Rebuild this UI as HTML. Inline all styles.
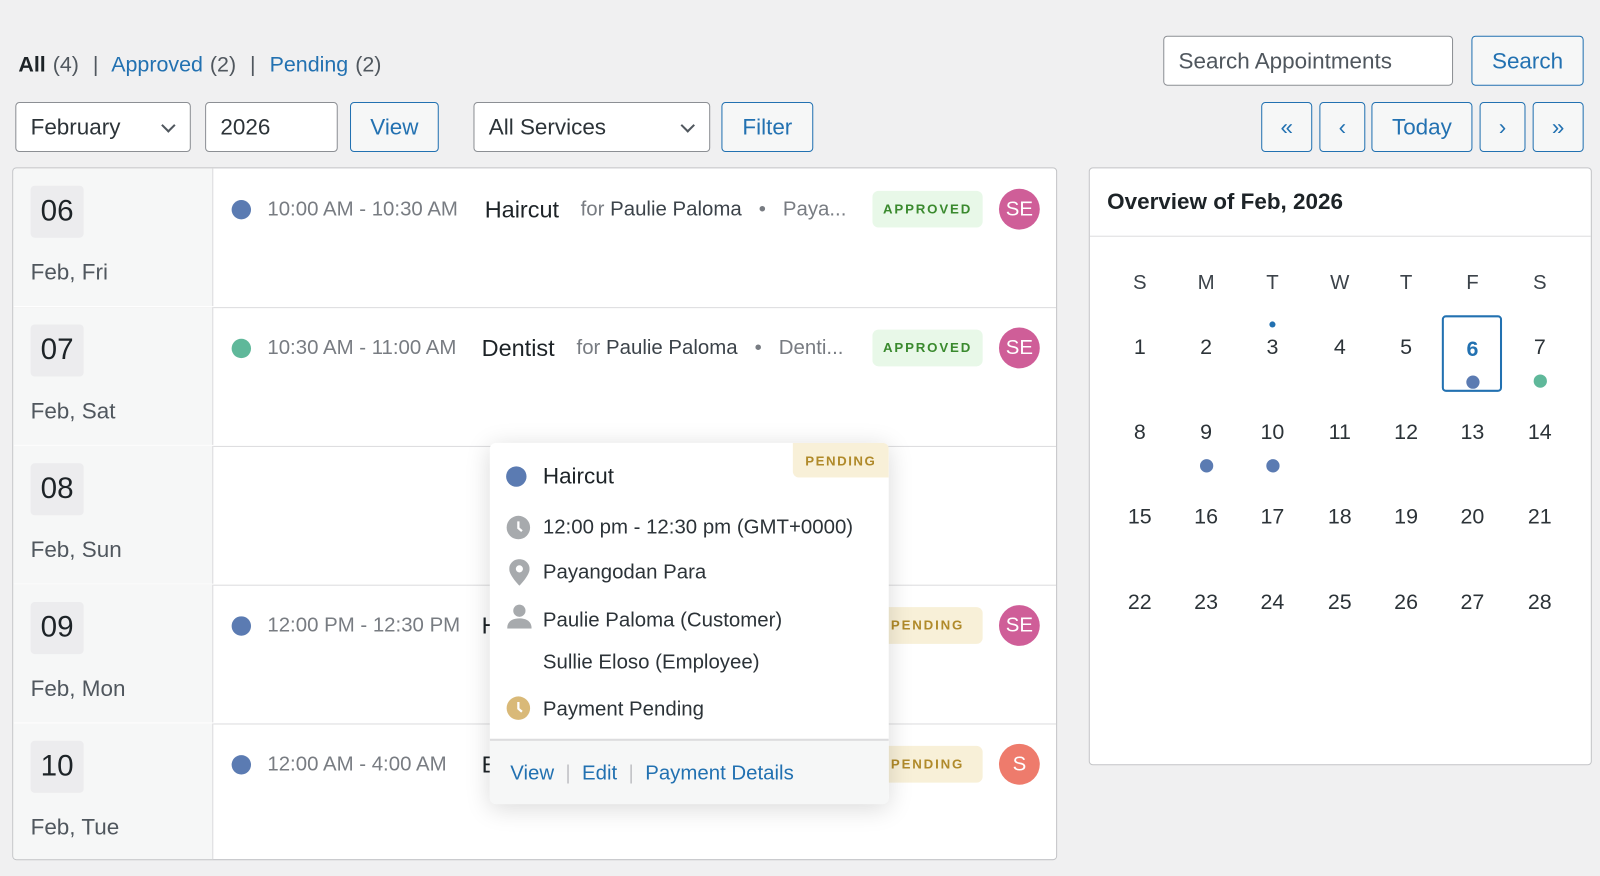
<!DOCTYPE html>
<html><head><meta charset="utf-8"><style>
html,body{margin:0;padding:0;background:#f0f0f1;overflow:hidden}
body{width:1600px;height:875px}
#w{position:absolute;left:0;top:0;width:1568px;height:858px;transform:scale(1.0204);transform-origin:0 0;font-family:"Liberation Sans",sans-serif;color:#1d2327}
.a{position:absolute}
.box{position:absolute;box-sizing:border-box;background:#fff;border:1px solid #8c8f94;border-radius:4px;font-size:22px;line-height:48px;padding-left:14px;color:#2c3338}
.btn{position:absolute;box-sizing:border-box;background:#f6f7f7;border:1px solid #2271b1;border-radius:4px;font-size:22px;line-height:48px;text-align:center;color:#2271b1}
.chev{position:absolute;right:16px;top:17px;width:8px;height:8px;border-right:2px solid #50575e;border-bottom:2px solid #50575e;transform:rotate(45deg)}
.row{position:absolute;left:0;width:1022px;height:136px;border-bottom:1px solid #dcdcde}
.left{position:absolute;left:0;top:0;width:195px;height:135px;background:#f6f7f7;border-right:1px solid #dcdcde}
.dnum{position:absolute;left:17px;top:17px;width:52px;height:51px;background:#ececee;border-radius:4px;font-size:29px;line-height:51px;text-align:center;color:#1d2327}
.dlab{position:absolute;left:17px;top:89px;font-size:22px;color:#50575e}
.dot{position:absolute;width:19px;height:19px;border-radius:50%;background:#5b7bb2}
.time{position:absolute;font-size:20px;color:#787c82}
.svc{position:absolute;font-size:23px;color:#1d2327}
.for{position:absolute;font-size:20px;color:#787c82}
.for b{font-weight:normal;color:#3c434a}
.badge{position:absolute;width:108px;height:36px;border-radius:6px;font-size:13px;font-weight:bold;letter-spacing:1.8px;text-align:center;line-height:36px}
.ap{background:#e8f8e8;color:#3a8a2e}
.pe{background:#f8f0d8;color:#b08a2a}
.av{position:absolute;width:40px;height:40px;border-radius:50%;background:#cf5e98;color:#fff;font-size:20px;line-height:40px;text-align:center}
.cd{position:absolute;border-radius:50%;background:#5b7bb2}
.pr{position:absolute;left:52px;font-size:20px;color:#2c3338}
</style></head><body><div id="w">

<div class="a" style="left:18px;top:52px;font-size:21px;color:#50575e;word-spacing:1px"><span style="color:#1d2327;font-weight:600">All</span> (4) &nbsp;|&nbsp; <span style="color:#2271b1">Approved</span> (2) &nbsp;|&nbsp; <span style="color:#2271b1">Pending</span> (2)</div>

<div class="box" style="left:15px;top:100px;width:172px;height:49px">February<div class="chev"></div></div>
<div class="box" style="left:201px;top:100px;width:130px;height:49px">2026</div>
<div class="btn" style="left:343px;top:100px;width:87px;height:49px">View</div>
<div class="box" style="left:464px;top:100px;width:232px;height:49px">All Services<div class="chev"></div></div>
<div class="btn" style="left:707px;top:100px;width:90px;height:49px">Filter</div>

<div class="box" style="left:1140px;top:35px;width:284px;height:49px;color:#50575e">Search Appointments</div>
<div class="btn" style="left:1442px;top:35px;width:110px;height:49px">Search</div>
<div class="btn" style="left:1236px;top:100px;width:50px;height:49px">«</div>
<div class="btn" style="left:1293px;top:100px;width:45px;height:49px">‹</div>
<div class="btn" style="left:1344px;top:100px;width:99px;height:49px">Today</div>
<div class="btn" style="left:1450px;top:100px;width:45px;height:49px">›</div>
<div class="btn" style="left:1502px;top:100px;width:50px;height:49px">»</div>

<div class="a" style="left:12px;top:164px;width:1022px;height:677px;background:#fff;border:1px solid #c3c4c7;border-radius:4px;overflow:hidden">
 <div class="row" style="top:0"><div class="left"><div class="dnum">06</div><div class="dlab">Feb, Fri</div></div>
  <div class="dot" style="left:214px;top:31px"></div><div class="time" style="left:249px;top:29px">10:00 AM - 10:30 AM</div>
  <div class="svc" style="left:462px;top:27px">Haircut</div><div class="for" style="left:556px;top:29px">for <b>Paulie Paloma</b> &nbsp; • &nbsp; Paya...</div>
  <div class="badge ap" style="left:842px;top:22px">APPROVED</div><div class="av" style="left:966px;top:20px">SE</div></div>
 <div class="row" style="top:136px"><div class="left"><div class="dnum">07</div><div class="dlab">Feb, Sat</div></div>
  <div class="dot" style="left:214px;top:31px;background:#5fb89a"></div><div class="time" style="left:249px;top:29px">10:30 AM - 11:00 AM</div>
  <div class="svc" style="left:459px;top:27px">Dentist</div><div class="for" style="left:552px;top:29px">for <b>Paulie Paloma</b> &nbsp; • &nbsp; Denti...</div>
  <div class="badge ap" style="left:842px;top:22px">APPROVED</div><div class="av" style="left:966px;top:20px">SE</div></div>
 <div class="row" style="top:272px"><div class="left"><div class="dnum">08</div><div class="dlab">Feb, Sun</div></div></div>
 <div class="row" style="top:408px"><div class="left"><div class="dnum">09</div><div class="dlab">Feb, Mon</div></div>
  <div class="dot" style="left:214px;top:31px"></div><div class="time" style="left:249px;top:29px">12:00 PM - 12:30 PM</div>
  <div class="svc" style="left:459px;top:27px">H</div>
  <div class="badge pe" style="left:842px;top:22px">PENDING</div><div class="av" style="left:966px;top:20px">SE</div></div>
 <div class="row" style="top:544px;border:none"><div class="left" style="height:136px"><div class="dnum">10</div><div class="dlab">Feb, Tue</div></div>
  <div class="dot" style="left:214px;top:31px"></div><div class="time" style="left:249px;top:29px">12:00 AM - 4:00 AM</div>
  <div class="svc" style="left:459px;top:27px">E</div>
  <div class="badge pe" style="left:842px;top:22px">PENDING</div><div class="av" style="left:966px;top:20px;background:#ee7b6c">S</div></div>
</div>

<div class="a" style="left:480px;top:434px;width:391px;height:354px;background:#fff;border-radius:6px;box-shadow:0 4px 24px rgba(0,0,0,.15);overflow:hidden">
 <div class="a" style="right:0;top:0;width:94px;height:34px;background:#f8f0d8;border-bottom-left-radius:6px;color:#b08a2a;font-size:13px;font-weight:bold;letter-spacing:1.5px;text-align:center;line-height:36px">PENDING</div>
 <div class="dot" style="left:16px;top:23px;width:20px;height:20px"></div>
 <div class="pr" style="top:20px;font-size:22px;color:#1d2327">Haircut</div>
 <svg class="a" style="left:16px;top:71px" width="24" height="24" viewBox="0 0 24 24"><circle cx="12" cy="12" r="11.5" fill="#a7aaad"/><path d="M12 6v6.5l3.5 3" stroke="#fff" stroke-width="2.2" fill="none"/></svg>
 <div class="pr" style="top:72px">12:00 pm - 12:30 pm (GMT+0000)</div>
 <svg class="a" style="left:19px;top:114px" width="20" height="26" viewBox="0 0 20 26"><path d="M10 0C4.5 0 0 4.3 0 9.6 0 16 10 26 10 26s10-10 10-16.4C20 4.3 15.5 0 10 0z" fill="#a7aaad"/><circle cx="10" cy="9.5" r="3.5" fill="#fff"/></svg>
 <div class="pr" style="top:116px">Payangodan Para</div>
 <svg class="a" style="left:17px;top:158px" width="24" height="24" viewBox="0 0 24 24"><circle cx="12" cy="6.5" r="6" fill="#a7aaad"/><path d="M0 24c0-7 5-10 12-10s12 3 12 10z" fill="#a7aaad"/></svg>
 <div class="pr" style="top:163px">Paulie Paloma (Customer)</div>
 <div class="pr" style="top:204px">Sullie Eloso (Employee)</div>
 <svg class="a" style="left:16px;top:248px" width="24" height="24" viewBox="0 0 24 24"><circle cx="12" cy="12" r="11.5" fill="#d9b978"/><path d="M12 6v6.5l3.5 3" stroke="#fff" stroke-width="2.2" fill="none"/></svg>
 <div class="pr" style="top:250px">Payment Pending</div>
 <div class="a" style="left:0;top:290px;width:391px;height:64px;background:#f6f7f7;border-top:2px solid #dcdcde;font-size:20px;color:#2271b1;line-height:64px;padding-left:20px;box-sizing:border-box">View <span style="color:#c3c4c7">&nbsp;|&nbsp;</span> Edit <span style="color:#c3c4c7">&nbsp;|&nbsp;</span> Payment Details</div>
</div>

<div class="a" style="left:1067px;top:164px;width:491px;height:584px;background:#fff;border:1px solid #c3c4c7;border-radius:4px">
 <div class="a" style="left:17px;top:20px;font-size:22px;font-weight:600;color:#1d2327">Overview of Feb, 2026</div>
 <div class="a" style="left:0;top:66px;width:491px;border-top:1px solid #dcdcde"></div>
 <div class="a" style="left:345px;top:144px;width:59px;height:75px;border:2px solid #2271b1;border-radius:4px;box-sizing:border-box"></div>
</div>
<div id="cal"></div>
<script>
var c=document.getElementById('cal'),h='',xs=[1117,1182,1247,1313,1378,1443,1509],d='SMTWTFS';
for(var i=0;i<7;i++)h+='<div class="a" style="left:'+(xs[i]-30)+'px;top:266px;width:60px;text-align:center;font-size:20px;color:#3c434a">'+d[i]+'</div>';
var ys=[329,412,495,579];
for(var r=0;r<4;r++)for(var i=0;i<7;i++){var n=r*7+i+1;h+='<div class="a" style="left:'+(xs[i]-30)+'px;top:'+(ys[r]+(n==6?2:0))+'px;width:60px;text-align:center;font-size:21px;'+(n==6?'color:#2271b1;font-weight:bold':'color:#2c3338')+'">'+n+'</div>';}
function dot(x,y,s,col){h+='<div class="cd" style="left:'+(x-s/2)+'px;top:'+(y-s/2)+'px;width:'+s+'px;height:'+s+'px;background:'+col+'"></div>';}
dot(1247,318,6,'#2271b1');dot(1443,374,13,'#5b7bb2');dot(1509,373,13,'#5fb89a');dot(1182,456,13,'#5b7bb2');dot(1247,456,13,'#5b7bb2');
c.innerHTML=h;
</script>
</div></body></html>
